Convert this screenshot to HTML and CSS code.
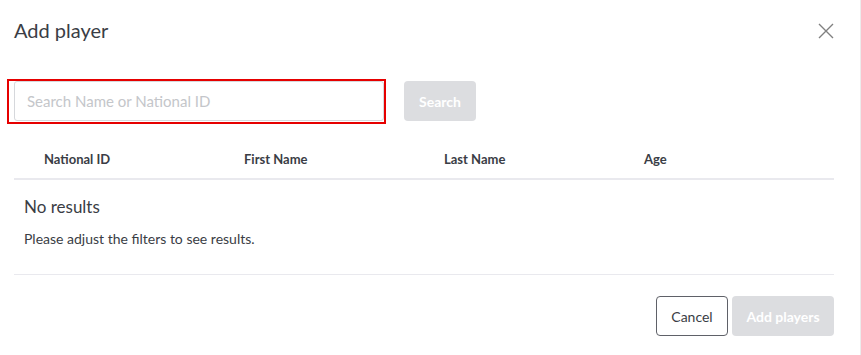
FILE: index.html
```html
<!DOCTYPE html>
<html>
<head>
<meta charset="utf-8">
<link rel="stylesheet" href="styles.css">
</head>
<body>
<div class="modal">
  <div class="modal-header">
    <h2 class="title">Add player</h2>
    <button class="close" aria-label="Close">
      <svg width="16" height="16" viewBox="0 0 16 16"><path d="M1 1 L15 15 M15 1 L1 15" stroke="#808080" stroke-width="1.4" fill="none"/></svg>
    </button>
  </div>
  <div class="search-row">
    <div class="highlight">
      <input class="search-input" type="text" placeholder="Search Name or National ID">
    </div>
    <button class="btn btn-disabled search-btn">Search</button>
  </div>
  <div class="table">
    <div class="thead">
      <div class="th">National ID</div>
      <div class="th">First Name</div>
      <div class="th">Last Name</div>
      <div class="th">Age</div>
    </div>
    <div class="empty">
      <div class="empty-title">No results</div>
      <div class="empty-text">Please adjust the filters to see results.</div>
    </div>
  </div>
  <div class="footer">
    <button class="btn btn-outline">Cancel</button>
    <button class="btn btn-disabled add-btn">Add players</button>
  </div>
</div>
</body>
</html>
```
FILE: styles.css
```css
html, body {
  margin: 0;
  padding: 0;
  background: #fff;
}
body {
  font-family: Lato, "Open Sans", Arial, sans-serif;
  color: #3a3d45;
  width: 861px;
  height: 355px;
  overflow: hidden;
  border-right: 1px solid #ececec;
  box-sizing: border-box;
}
.modal {
  padding: 0 26px 0 14px;
}
.modal-header {
  display: flex;
  justify-content: space-between;
  align-items: center;
  height: 62px;
}
.title {
  margin: -2px 0 0;
  font-size: 20px;
  font-weight: 400;
  color: #3a3d45;
  line-height: 24px;
}
.close {
  border: 0;
  background: none;
  padding: 0;
  width: 16px;
  height: 16px;
  display: flex;
}
.search-row {
  display: flex;
  align-items: flex-start;
  margin-top: 17px;
  margin-left: -7px;
}
.highlight {
  border: 2px solid #e60000;
  padding: 0 0 1px 5px;
  display: flex;
}
.search-input {
  width: 370px;
  height: 40px;
  box-sizing: border-box;
  border: 1px solid #d6d8dc;
  border-radius: 3px;
  padding: 0 12px;
  font-family: Lato, Arial, sans-serif;
  font-size: 15px;
  color: #333;
  outline: none;
}
.search-input::placeholder {
  color: #c4c6ca;
}
.btn {
  height: 40px;
  border-radius: 4px;
  font-family: Lato, Arial, sans-serif;
  font-size: 14px;
  padding: 0 14px;
  box-sizing: border-box;
}
.btn-disabled {
  background: #dcdde0;
  color: #fff;
  border: 0;
  font-weight: 700;
}
.search-btn {
  margin-left: 18px;
  margin-top: 2px;
  width: 72px;
  padding: 0;
}
.table {
  margin-top: 17px;
  width: 820px;
}
.thead {
  display: grid;
  grid-template-columns: 200px 200px 200px 1fr;
  padding: 0 0 1px 30px;
  height: 36px;
  align-items: center;
  border-bottom: 2px solid #e9e9ee;
}
.th {
  font-size: 13px;
  font-weight: 700;
  color: #3a3d45;
}
.empty {
  padding: 17px 10px 27px;
  border-bottom: 1px solid #e9e9ee;
}
.empty-title {
  font-size: 17px;
  line-height: 20px;
  color: #3a3d45;
}
.empty-text {
  margin-top: 14px;
  font-size: 14px;
  line-height: 16px;
  color: #3a3d45;
}
.footer {
  display: flex;
  justify-content: flex-end;
  gap: 4px;
  width: 820px;
  margin-top: 21px;
}
.btn-outline {
  background: #fff;
  border: 1px solid #5f6168;
  color: #3a3d45;
  width: 72px;
  padding: 0;
  font-weight: 400;
}
.add-btn {
  width: 102px;
  padding: 0;
}
```
